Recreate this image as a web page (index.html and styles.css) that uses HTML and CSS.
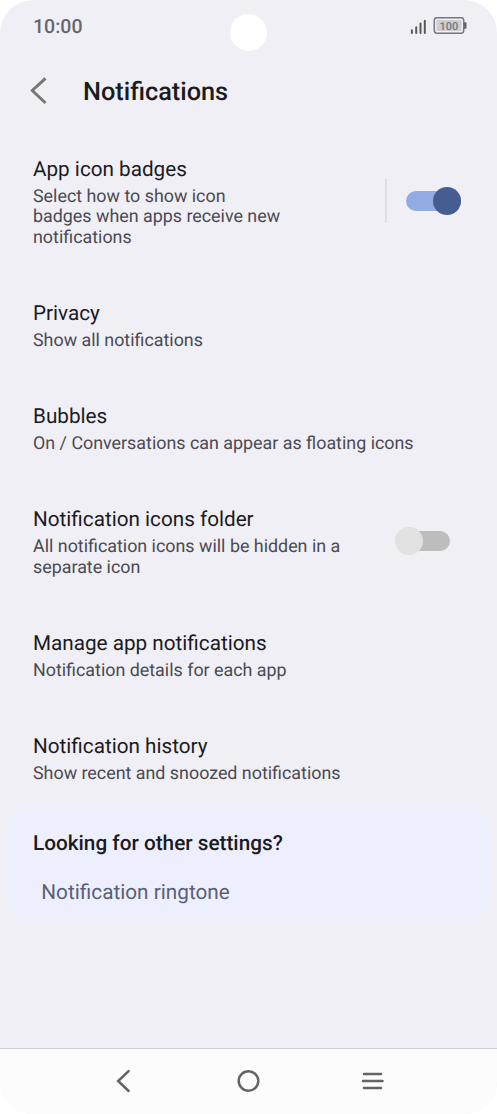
FILE: index.html
```html
<!DOCTYPE html>
<html lang="en">
<head>
<meta charset="utf-8">
<title>Notifications</title>
<link rel="stylesheet" href="styles.css">
</head>
<body>
<div class="phone">
  <div class="camera"></div>
  <div class="status">
    <span class="time">10:00</span>
    <svg class="status-icons" width="58" height="20" viewBox="0 0 58 20">
      <g stroke="#57575b" stroke-width="2" stroke-linecap="round">
        <path d="M1.9 14.3v2.7M6.2 11.3v5.7M10.5 7.5v9.5M14.8 4.7v12.3"/>
      </g>
      <rect x="24.3" y="1.8" width="29.4" height="15.4" rx="2.6" fill="#f0eff6" stroke="#77777c" stroke-width="1.5"/>
      <rect x="26.5" y="4" width="25" height="11" rx="1" fill="#cdcdd2"/>
      <path d="M54 6.3h1.7q.8 0 .8.8v4.8q0 .8-.8.8h-1.7z" fill="#66666b"/>
      <text class="level" x="39" y="13.5" text-anchor="middle">100</text>
    </svg>
  </div>
  <header class="header">
    <svg class="back" width="18" height="28" viewBox="0 0 18 28"><path d="M15.5 1.3 2.3 13.5l13.2 12.5" fill="none" stroke="#77777a" stroke-width="3"/></svg>
    <h1 class="heading">Notifications</h1>
  </header>
  <main class="list">
    <section class="row">
      <div class="text">
        <h2 class="title">App icon badges</h2>
        <p class="summary">Select how to show icon<br>badges when apps receive new<br>notifications</p>
      </div>
      <div class="divider"></div>
      <div class="switch on"><span class="thumb"></span></div>
    </section>
    <section class="row">
      <div class="text"><h2 class="title">Privacy</h2><p class="summary">Show all notifications</p></div>
    </section>
    <section class="row">
      <div class="text"><h2 class="title">Bubbles</h2><p class="summary">On / Conversations can appear as floating icons</p></div>
    </section>
    <section class="row">
      <div class="text"><h2 class="title">Notification icons folder</h2><p class="summary">All notification icons will be hidden in a<br>separate icon</p></div>
      <div class="switch off"><span class="thumb"></span></div>
    </section>
    <section class="row">
      <div class="text"><h2 class="title">Manage app notifications</h2><p class="summary">Notification details for each app</p></div>
    </section>
    <section class="row">
      <div class="text"><h2 class="title">Notification history</h2><p class="summary">Show recent and snoozed notifications</p></div>
    </section>
    <section class="card">
      <h2 class="card-title">Looking for other settings?</h2>
      <a class="card-link">Notification ringtone</a>
    </section>
  </main>
  <nav class="nav">
    <svg width="28" height="28" viewBox="0 0 28 28"><path d="M18.6 4.2 8.2 14l10.4 10" class="stroke"/></svg>
    <svg width="28" height="28" viewBox="0 0 28 28"><circle cx="13.5" cy="14" r="9.8" class="stroke"/></svg>
    <svg width="28" height="28" viewBox="0 0 28 28"><path d="M5 7h17M4 14h19.5M5 21h17" class="stroke"/></svg>
  </nav>
</div>
</body>
</html>
```
FILE: styles.css
```css
* { box-sizing: border-box; }
body { margin: 0; background: #fff; font-family: Roboto, sans-serif; color: #1b1b21; text-rendering: geometricPrecision; }
h1, h2, p { margin: 0; font-weight: 400; white-space: nowrap; }
svg { display: block; flex: none; }

.phone {
  position: relative;
  display: flex;
  flex-direction: column;
  width: 497px;
  height: 1114px;
  overflow: hidden;
  border-radius: 33px;
  background: #f0eff6;
}
.camera {
  position: absolute;
  left: 230px;
  top: 14px;
  width: 37px;
  height: 37px;
  border-radius: 50%;
  background: #fff;
}
.status {
  display: flex;
  justify-content: space-between;
  align-items: center;
  height: 52px;
  padding: 0 29px 0 33px;
}
.time { padding-top: 1px; color: #67676b; font-size: 19.5px; font-weight: 500; line-height: 24px; }
.level { font-size: 11px; font-weight: 500; fill: #77777b; }

.header { display: flex; align-items: center; height: 78.2px; padding: 0 33px 0 30px; }
.back { margin-right: 35px; }
.heading { padding-top: 3px; font-size: 25.3px; font-weight: 500; line-height: 30px; }

.list { flex: 1; }
.row { display: flex; align-items: center; padding: 27.05px 36px 25.7px 33px; }
.text { flex: 1; }
.title { font-size: 20.7px; line-height: 26px; }
.summary { margin-top: 3.65px; font-size: 17.87px; line-height: 20.6px; color: #4a4a52; }
.divider { width: 2px; height: 44px; margin: -3.6px 19px 0 0; background: #dddce3; }
.switch { display: flex; align-items: center; height: 20px; margin-top: -3px; border-radius: 10px; }
.on { justify-content: flex-end; width: 55px; background: #93abe3; }
.off { width: 43px; margin-right: 11px; background: #bdbdbe; }
.thumb { flex: none; width: 28px; height: 28px; border-radius: 50%; }
.on .thumb { background: #465d91; }
.off .thumb { margin-left: -12px; background: #e1e1e2; }

.card {
  height: 113px;
  margin: -2.4px 8px 0;
  padding: 23.8px 25px 22px;
  border-radius: 23px;
  background: #edefff;
}
.card-title { font-size: 20.75px; font-weight: 500; line-height: 26px; }
.card-link { display: block; margin: 23px 0 0 8.3px; font-size: 20.75px; line-height: 26px; color: #5a6075; }

.nav {
  display: flex;
  justify-content: space-between;
  align-items: center;
  height: 66px;
  padding: 0 110px 2px;
  border-top: 1px solid #cfced5;
  background: #fcfcfc;
}
.stroke { fill: none; stroke: #646466; stroke-width: 2.5; stroke-linecap: round; }
```
